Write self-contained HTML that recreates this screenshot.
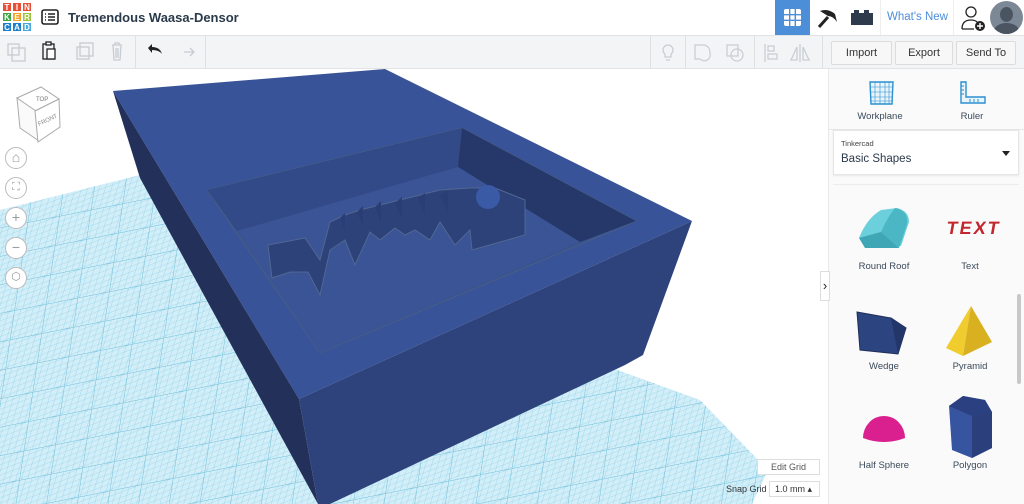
<!DOCTYPE html>
<html><head><meta charset="utf-8"><style>
*{margin:0;padding:0;box-sizing:border-box}
body{width:1024px;height:504px;overflow:hidden;background:#fff;font-family:"Liberation Sans",sans-serif;position:relative;color:#2b3a4a}
.top{position:absolute;left:0;top:0;width:1024px;height:36px;background:#fff;border-bottom:1px solid #e2e2e2}
.tb{position:absolute;left:0;top:36px;width:1024px;height:33px;background:#f3f4f5;border-bottom:1px solid #e3e3e3}
.logo{position:absolute;left:2px;top:2px;width:30px;height:30px;display:grid;grid-template-columns:repeat(3,10px);grid-template-rows:repeat(3,10px)}
.logo span{color:#fff;font-size:8px;font-weight:bold;text-align:center;line-height:10px;border:0.5px solid #fff}
.btn{position:absolute;top:41px;height:24px;border:1px solid #dcdcdc;background:#f7f7f7;border-radius:2px;font-size:11px;text-align:center;line-height:22px;color:#333}
.panel{position:absolute;left:828px;top:69px;width:196px;height:435px;background:#fafafa;border-left:1px solid #e8e8e8}
.lbl{position:absolute;font-size:9.5px;color:#3b4a5a;text-align:center;width:90px}
.nav{position:absolute;left:5px;width:22px;height:22px;border:1px solid #bbb;border-radius:50%;background:#fff;color:#999;font-size:14px;text-align:center;line-height:19px}
</style></head><body>
<svg style="position:absolute;left:0;top:69px" width="828" height="435" viewBox="0 69 828 435">
<defs>
<pattern id="g" width="6" height="6" patternUnits="userSpaceOnUse" patternTransform="skewX(-20) rotate(-12)">
<rect width="6" height="6" fill="#d2eef8"/><path d="M0 0H6M0 0V6" stroke="#8fd0e6" stroke-width="0.7"/></pattern>
<pattern id="G" width="30" height="30" patternUnits="userSpaceOnUse" patternTransform="skewX(-20) rotate(-12)">
<rect width="30" height="30" fill="url(#g)"/><path d="M0 0H30M0 0V30" stroke="#6bbcd8" stroke-width="0.9"/></pattern>
</defs>
<polygon points="0,210 140,175 320,504 0,504" fill="url(#G)"/>
<polygon points="612,368 700,400 768,470 752,504 330,504" fill="url(#G)"/>
<polygon points="113,91 385,69 692,221 299,399" fill="#385397"/>
<polygon points="113,91 140,178 318,504 299,399" fill="#22305a"/>
<polygon points="299,399 692,221 643,355 625,365 330,504 318,504" fill="#2e437c"/>
<polygon points="207,190 462,128 636,221 320,353" fill="#37528f" stroke="#4a5e84" stroke-width="1"/>
<polygon points="207,190 462,128 458,167 237,231" fill="#324a88"/>
<polygon points="462,128 636,221 580,242 458,167" fill="#253869"/>
<polygon points="237,231 458,167 580,242 320,353" fill="#3a5495"/>
<path d="M268,245 L305,238 L320,260 L330,222 L345,215 L360,210 L380,205 L400,200 L420,195 L440,190 L470,188 L495,188 L525,200 L525,235 L472,250 L470,230 L455,245 L440,222 L430,240 L415,230 L405,235 L395,228 L380,240 L370,232 L355,265 L345,240 L330,250 L320,295 L308,272 L290,272 L272,278 Z" fill="#2c4278" stroke="#516793" stroke-width="1"/>
<circle cx="488" cy="197" r="12" fill="#3a5aa5"/>
<g fill="#2a3e75"><path d="M340,218l5,-5v18z M357,212l6,-6v20z M375,207l6,-6v22z M395,203l7,-6v22z M418,198l7,-5v22z M440,195l8,-4v20z"/></g>
</svg>
<div class="top">
<div class="logo">
<span style="background:#e94f37">T</span><span style="background:#e94f37">I</span><span style="background:#e94f37">N</span>
<span style="background:#41a645">K</span><span style="background:#f3a32a">E</span><span style="background:#9bc53d">R</span>
<span style="background:#1e7fce">C</span><span style="background:#1e7fce">A</span><span style="background:#4aa9dc">D</span></div>
<svg style="position:absolute;left:41px;top:9px" width="18" height="16"><rect x="1" y="1" width="16" height="14" rx="2" fill="none" stroke="#222" stroke-width="1.6"/><path d="M4 5h1M7 5h7M4 8h1M7 8h7M4 11h1M7 11h7" stroke="#222" stroke-width="1.4"/></svg>
<div style="position:absolute;left:68px;top:10px;font-size:13px;font-weight:bold;color:#2b3a4a">Tremendous Waasa-Densor</div>
<div style="position:absolute;left:775px;top:0;width:35px;height:35px;background:#4d8ed9"><svg style="margin:9px" width="17" height="17"><rect x="0" y="0" width="17" height="17" rx="2" fill="#fff"/><path d="M5.7 0v17M11.3 0v17M0 5.7h17M0 11.3h17" stroke="#4d8ed9" stroke-width="1.4"/></svg></div>
<svg style="position:absolute;left:816px;top:6px" width="24" height="24"><path d="M4 5q8-3 15 3l2 8q-4-6-9-6z" fill="#222"/><path d="M12 11l-9 10" stroke="#222" stroke-width="3"/></svg>
<svg style="position:absolute;left:851px;top:9px" width="22" height="16"><rect x="0" y="4" width="22" height="12" fill="#2d3b4d"/><rect x="3" y="1" width="5" height="4" fill="#2d3b4d"/><rect x="13" y="1" width="5" height="4" fill="#2d3b4d"/></svg>
<div style="position:absolute;left:880px;top:0;width:1px;height:35px;background:#eee"></div>
<div style="position:absolute;left:887px;top:11px;font-size:11.5px;color:#4d8ed9">What's New</div>
<div style="position:absolute;left:953px;top:0;width:1px;height:35px;background:#eee"></div>
<svg style="position:absolute;left:960px;top:4px" width="28" height="28"><circle cx="11" cy="8" r="5" fill="none" stroke="#222" stroke-width="1.3"/><path d="M2 25q0-9 9-9q5 0 7 3M2 25h12" fill="none" stroke="#222" stroke-width="1.3"/><circle cx="20" cy="22" r="5" fill="#222"/><path d="M17 22h6M20 19v6" stroke="#fff" stroke-width="1.4"/></svg>
<div style="position:absolute;left:990px;top:1px;width:33px;height:33px;border-radius:50%;background:#7c8896;overflow:hidden"><div style="position:absolute;left:10px;top:6px;width:13px;height:15px;border-radius:50%;background:#4b5562"></div><div style="position:absolute;left:4px;top:22px;width:25px;height:16px;border-radius:50%;background:#4b5562"></div></div>
</div>
<div class="tb">
<div style="position:absolute;left:135px;top:0;width:1px;height:33px;background:#e0e0e0"></div>
<div style="position:absolute;left:205px;top:0;width:1px;height:33px;background:#e0e0e0"></div>
<div style="position:absolute;left:650px;top:0;width:1px;height:33px;background:#e0e0e0"></div>
<div style="position:absolute;left:685px;top:0;width:1px;height:33px;background:#e0e0e0"></div>
<div style="position:absolute;left:754px;top:0;width:1px;height:33px;background:#e0e0e0"></div>
<div style="position:absolute;left:822px;top:0;width:1px;height:33px;background:#e0e0e0"></div>
<svg style="position:absolute;left:0;top:0" width="220" height="33"><g fill="none" stroke="#c7ccd2" stroke-width="1.3"><rect x="8" y="8" width="11" height="11"/><rect x="12" y="12" width="13" height="13"/><rect x="80" y="7" width="13" height="13"/><rect x="77" y="11" width="12" height="12"/><path d="M112 9h10M115 9v-2h4v2M113 9l1 15h6l1-15M116 12v10M118 12v10"/><path d="M184 16h10M190 12l4 4-4 4"/></g>
<g fill="none" stroke="#222" stroke-width="1.3"><rect x="43" y="8" width="11" height="15"/><rect x="47" y="13" width="8" height="10" fill="#fff"/><rect x="46" y="6" width="5" height="3" fill="#fff"/></g>
<path d="M148 12l4-4v3q8 0 10 7q-3-4-10-4v3z" fill="#222"/></svg>
<svg style="position:absolute;left:655px;top:0" width="170" height="33"><g fill="none" stroke="#c7ccd2" stroke-width="1.2"><path d="M10 18a5 5 0 1 1 6 0v3h-6zM11 24h4"/><path d="M40 9h10q5 2 5 8a6 6 0 0 1-10 6h-5z"/><rect x="72" y="9" width="11" height="11"/><circle cx="82" cy="19" r="6"/><path d="M110 8v18M113 10h6v5h-6zM113 18h9v5h-9z"/><path d="M145 8v18M142 24l-6 0 6-13zM148 24h6l-6-13z"/></g></svg>
</div>
<div class="btn" style="left:831px;width:61px">Import</div>
<div class="btn" style="left:895px;width:58px">Export</div>
<div class="btn" style="left:956px;width:60px">Send To</div>
<div class="panel">
<svg style="position:absolute;left:40px;top:12px" width="26" height="24"><path d="M1 1h23l-1 22H2z" fill="#e9f4fb" stroke="#2b8fd0" stroke-width="1.4"/><path d="M6 1v22M11 1v22M16 1v22M20 1v22M1 6h23M1 11h23M1 16h23M1 20h23" stroke="#2b8fd0" stroke-width="0.6"/></svg>
<div class="lbl" style="left:6px;top:42px">Workplane</div>
<svg style="position:absolute;left:130px;top:12px" width="28" height="24"><path d="M2 1h5v15h19v6H2z" fill="#e9f4fb" stroke="#2b8fd0" stroke-width="1.4"/><path d="M2 5h3M2 9h3M2 13h3M11 18v3M15 18v3M19 18v3" stroke="#2b8fd0"/></svg>
<div class="lbl" style="left:98px;top:42px">Ruler</div>
<div style="position:absolute;left:0;top:60px;width:196px;height:1px;background:#e6e6e6"></div>
<div style="position:absolute;left:4px;top:61px;width:186px;height:45px;background:#fff;border:1px solid #e6e6e6;box-shadow:0 1px 2px rgba(0,0,0,.08)">
<div style="position:absolute;left:7px;top:8px;font-size:7.5px;color:#444">Tinkercad</div>
<div style="position:absolute;left:7px;top:22px;font-size:11.5px;color:#2b3a4a">Basic Shapes</div>
<div style="position:absolute;left:168px;top:20px;width:0;height:0;border-left:4px solid transparent;border-right:4px solid transparent;border-top:5px solid #222"></div></div>
<div style="position:absolute;left:4px;top:115px;width:186px;height:1px;background:#ececec"></div>
<svg style="position:absolute;left:0;top:125px" width="196" height="300" viewBox="828 194 196 300">
<path d="M858 238q8-20 22-28l16-2q12 3 12 14l-8 24h-34z" fill="#6ccfdc"/><path d="M880 232q6-14 14-24q14 3 12 16l-8 24z" fill="#4bb6c4"/><path d="M858 238l22-6 18 16h-34z" fill="#3ea6b4"/>
<text x="944" y="234" font-size="18" font-weight="bold" fill="#c1272d" font-family="Liberation Sans" transform="skewX(-10) translate(42 0)" textLength="52">TEXT</text>
<path d="M856 312l34 6 15 10-8 26-38-4z" fill="#2c4480" stroke="#1f2f5a"/><path d="M890 318l15 10-8 26z" fill="#22366a"/>
<path d="M970 306l-25 42 17 8z" fill="#f0cc2e"/><path d="M970 306l21 36-29 14z" fill="#d9b020"/>
<path d="M862 438a21 22 0 0 1 42 0q-21 8-42 0z" fill="#da1f8e"/>
<path d="M948 406l14-10 22 4 7 12 0 36-20 10-20-8z" fill="#3654a0"/><path d="M948 406l14-10 22 4 7 12-20 4z" fill="#2b4080"/><path d="M971 416l20-4v36l-20 10z" fill="#2a3f7c"/>
</svg>
<div class="lbl" style="left:10px;top:192px">Round Roof</div>
<div class="lbl" style="left:96px;top:192px">Text</div>
<div class="lbl" style="left:10px;top:292px">Wedge</div>
<div class="lbl" style="left:96px;top:292px">Pyramid</div>
<div class="lbl" style="left:10px;top:391px">Half Sphere</div>
<div class="lbl" style="left:96px;top:391px">Polygon</div>
<div style="position:absolute;left:188px;top:225px;width:4px;height:90px;border-radius:2px;background:#c8c8c8"></div>
</div>
<div style="position:absolute;left:820px;top:271px;width:10px;height:30px;background:#fff;border:1px solid #ddd;font-size:13px;line-height:28px;text-align:center;color:#222">›</div>
<svg style="position:absolute;left:14px;top:84px" width="62" height="62"><path d="M3 14l24-11 18 12-24 12z" fill="#fff" stroke="#aaa"/><path d="M3 14l19 13 3 30-19-13z" fill="#fafafa" stroke="#aaa"/><path d="M21 27l24-12 1 28-22 15z" fill="#fff" stroke="#aaa"/><text x="22" y="17" font-size="6" fill="#777" font-family="Liberation Sans">TOP</text><text x="25" y="42" font-size="6" fill="#888" font-family="Liberation Sans" transform="rotate(-25 25 42)">FRONT</text></svg>
<div class="nav" style="top:147px">⌂</div>
<div class="nav" style="top:177px;font-size:11px">⛶</div>
<div class="nav" style="top:207px">+</div>
<div class="nav" style="top:237px">−</div>
<div class="nav" style="top:267px;font-size:11px">⬡</div>
<div style="position:absolute;left:757px;top:459px;width:63px;height:16px;background:#fff;border:1px solid #ddd;font-size:9px;text-align:center;line-height:14px;color:#555">Edit Grid</div>
<div style="position:absolute;left:726px;top:484px;font-size:9px;color:#333">Snap Grid</div>
<div style="position:absolute;left:769px;top:481px;width:51px;height:16px;background:#fff;border:1px solid #ddd;font-size:9px;line-height:14px;padding-left:5px;color:#333">1.0 mm ▴</div>
</body></html>
